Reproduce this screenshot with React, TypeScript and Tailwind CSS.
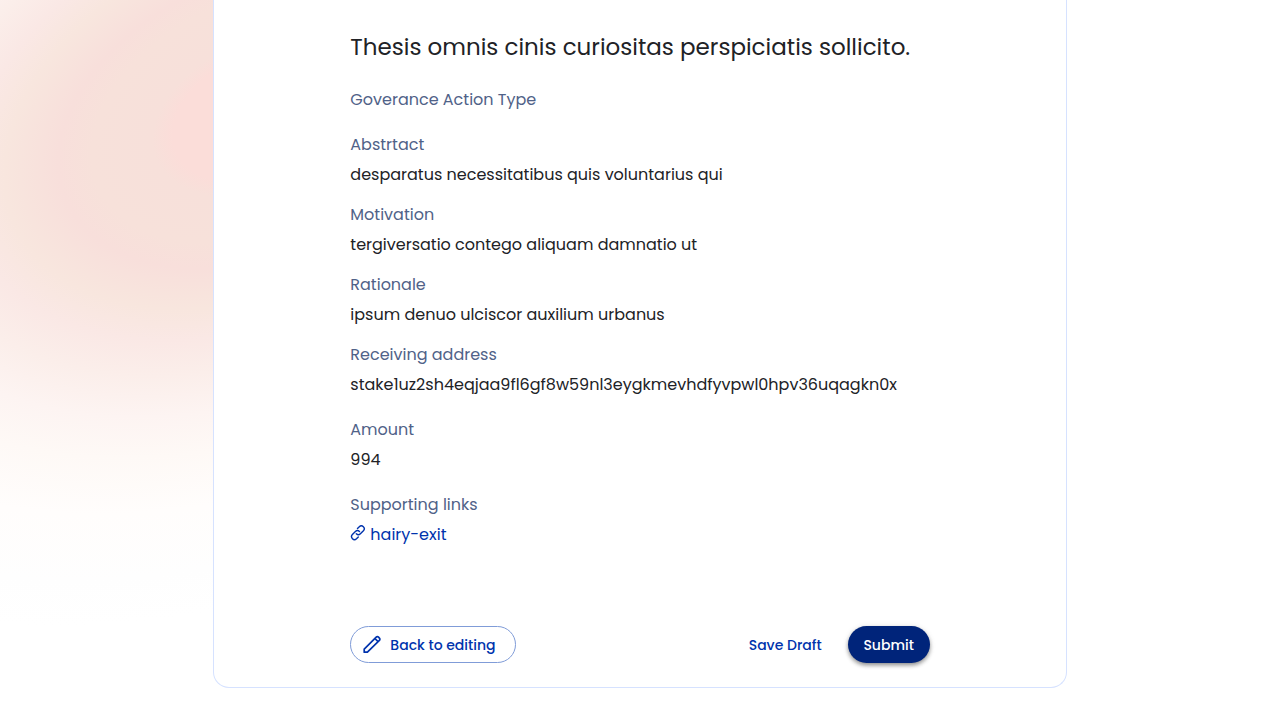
import type { ReactNode } from "react";

function LinkIcon() {
  return (
    <svg viewBox="0 0 16 20" className="h-5 w-4 shrink-0" fill="none" stroke="currentColor" strokeWidth="1.4" strokeLinecap="round" strokeLinejoin="round" aria-hidden="true">
      <path d="M6.300 8.300a2.900 2.900 0 0 0 4.100 0l3-3a2.900 2.900 0 0 0-4.100-4.100L7.500 3" transform="translate(0 0.5)" />
      <path d="M9.500 6.100a2.900 2.900 0 0 0-4.100 0l-3 3a2.900 2.900 0 0 0 4.100 4.100L8.300 11.400" transform="translate(0 0.5)" />
    </svg>
  );
}

function PencilIcon() {
  return (
    <svg viewBox="0 0 20 20" className="size-5 shrink-0" fill="none" stroke="currentColor" strokeWidth="1.7" strokeLinejoin="round" aria-hidden="true">
      <path d="M2.200 17.200v-3L14.200 2.200a1.600 1.600 0 0 1 2.300 0l.9.900a1.600 1.600 0 0 1 0 2.300L5.400 17.200z" />
      <path d="M12.900 3.500l3.200 3.200" />
    </svg>
  );
}

function Field({ label, children }: { label: string; children?: ReactNode }) {
  return (
    <div className="flex flex-col gap-1.5">
      <dt className="text-[#506288]">{label}</dt>
      {children && <dd className="break-words">{children}</dd>}
    </div>
  );
}

export default function App() {
  return (
    <div className="relative min-h-screen overflow-hidden bg-white pb-8 font-[Poppins,Inter,sans-serif] text-base text-[#212226]">
      <div
        aria-hidden="true"
        className="absolute -left-[446px] -top-[348px] h-[926px] w-[1412px] -rotate-[24deg] bg-[radial-gradient(closest-side,#fbddd9_0%,#fbddd9_13%,#f7e0da_16%,#f7e1da_25%,#f8dfdb_30%,#f8e6de_38%,#fae8e5_44%,#fbeeea_51%,#fdf4f2_59%,#fef9f6_67%,#fffdfc_78%,#fefefe_91%,#ffffff_100%)]"
      />
      <main className="relative mx-auto w-2/3 rounded-b-2xl border border-t-0 border-[#d6e2ff] bg-white px-[136px] pb-6 pt-[31px]">
        <h1 className="text-[23px] leading-8">Thesis omnis cinis curiositas perspiciatis sollicito.</h1>
        <dl className="mt-[25px] flex flex-col gap-[21px]">
          <Field label="Goverance Action Type" />
          <div className="flex flex-col gap-4">
            <Field label="Abstrtact">desparatus necessitatibus quis voluntarius qui</Field>
            <Field label="Motivation">tergiversatio contego aliquam damnatio ut</Field>
            <Field label="Rationale">ipsum denuo ulciscor auxilium urbanus</Field>
            <Field label="Receiving address">stake1uz2sh4eqjaa9fl6gf8w59nl3eygkmevhdfyvpwl0hpv36uqagkn0x</Field>
          </div>
          <Field label="Amount">994</Field>
          <Field label="Supporting links">
            <a href="#hairy-exit" className="flex w-fit items-center gap-1 text-[#0033ad]">
              <LinkIcon />
              hairy-exit
            </a>
          </Field>
        </dl>
        <div className="mt-[79px] flex items-center justify-between text-sm font-medium">
          <button type="button" className="flex h-[37px] min-w-[166px] items-center gap-2 rounded-full border border-[#809cd8] pl-[11px] pr-[15px] text-[#0033ad]">
            <PencilIcon />
            Back to editing
          </button>
          <div className="flex items-center gap-2">
            <button type="button" className="h-[37px] min-w-[109px] rounded-full px-4 text-[#0033ad]">
              Save Draft
            </button>
            <button type="button" className="h-[37px] min-w-[82px] rounded-full bg-[#00247a] px-[15px] text-white shadow-[0_2px_4px_-1px_rgba(0,0,0,0.3),0_3px_4px_0_rgba(0,0,0,0.18),0_1px_6px_0_rgba(0,0,0,0.12)]">
              Submit
            </button>
          </div>
        </div>
      </main>
    </div>
  );
}
